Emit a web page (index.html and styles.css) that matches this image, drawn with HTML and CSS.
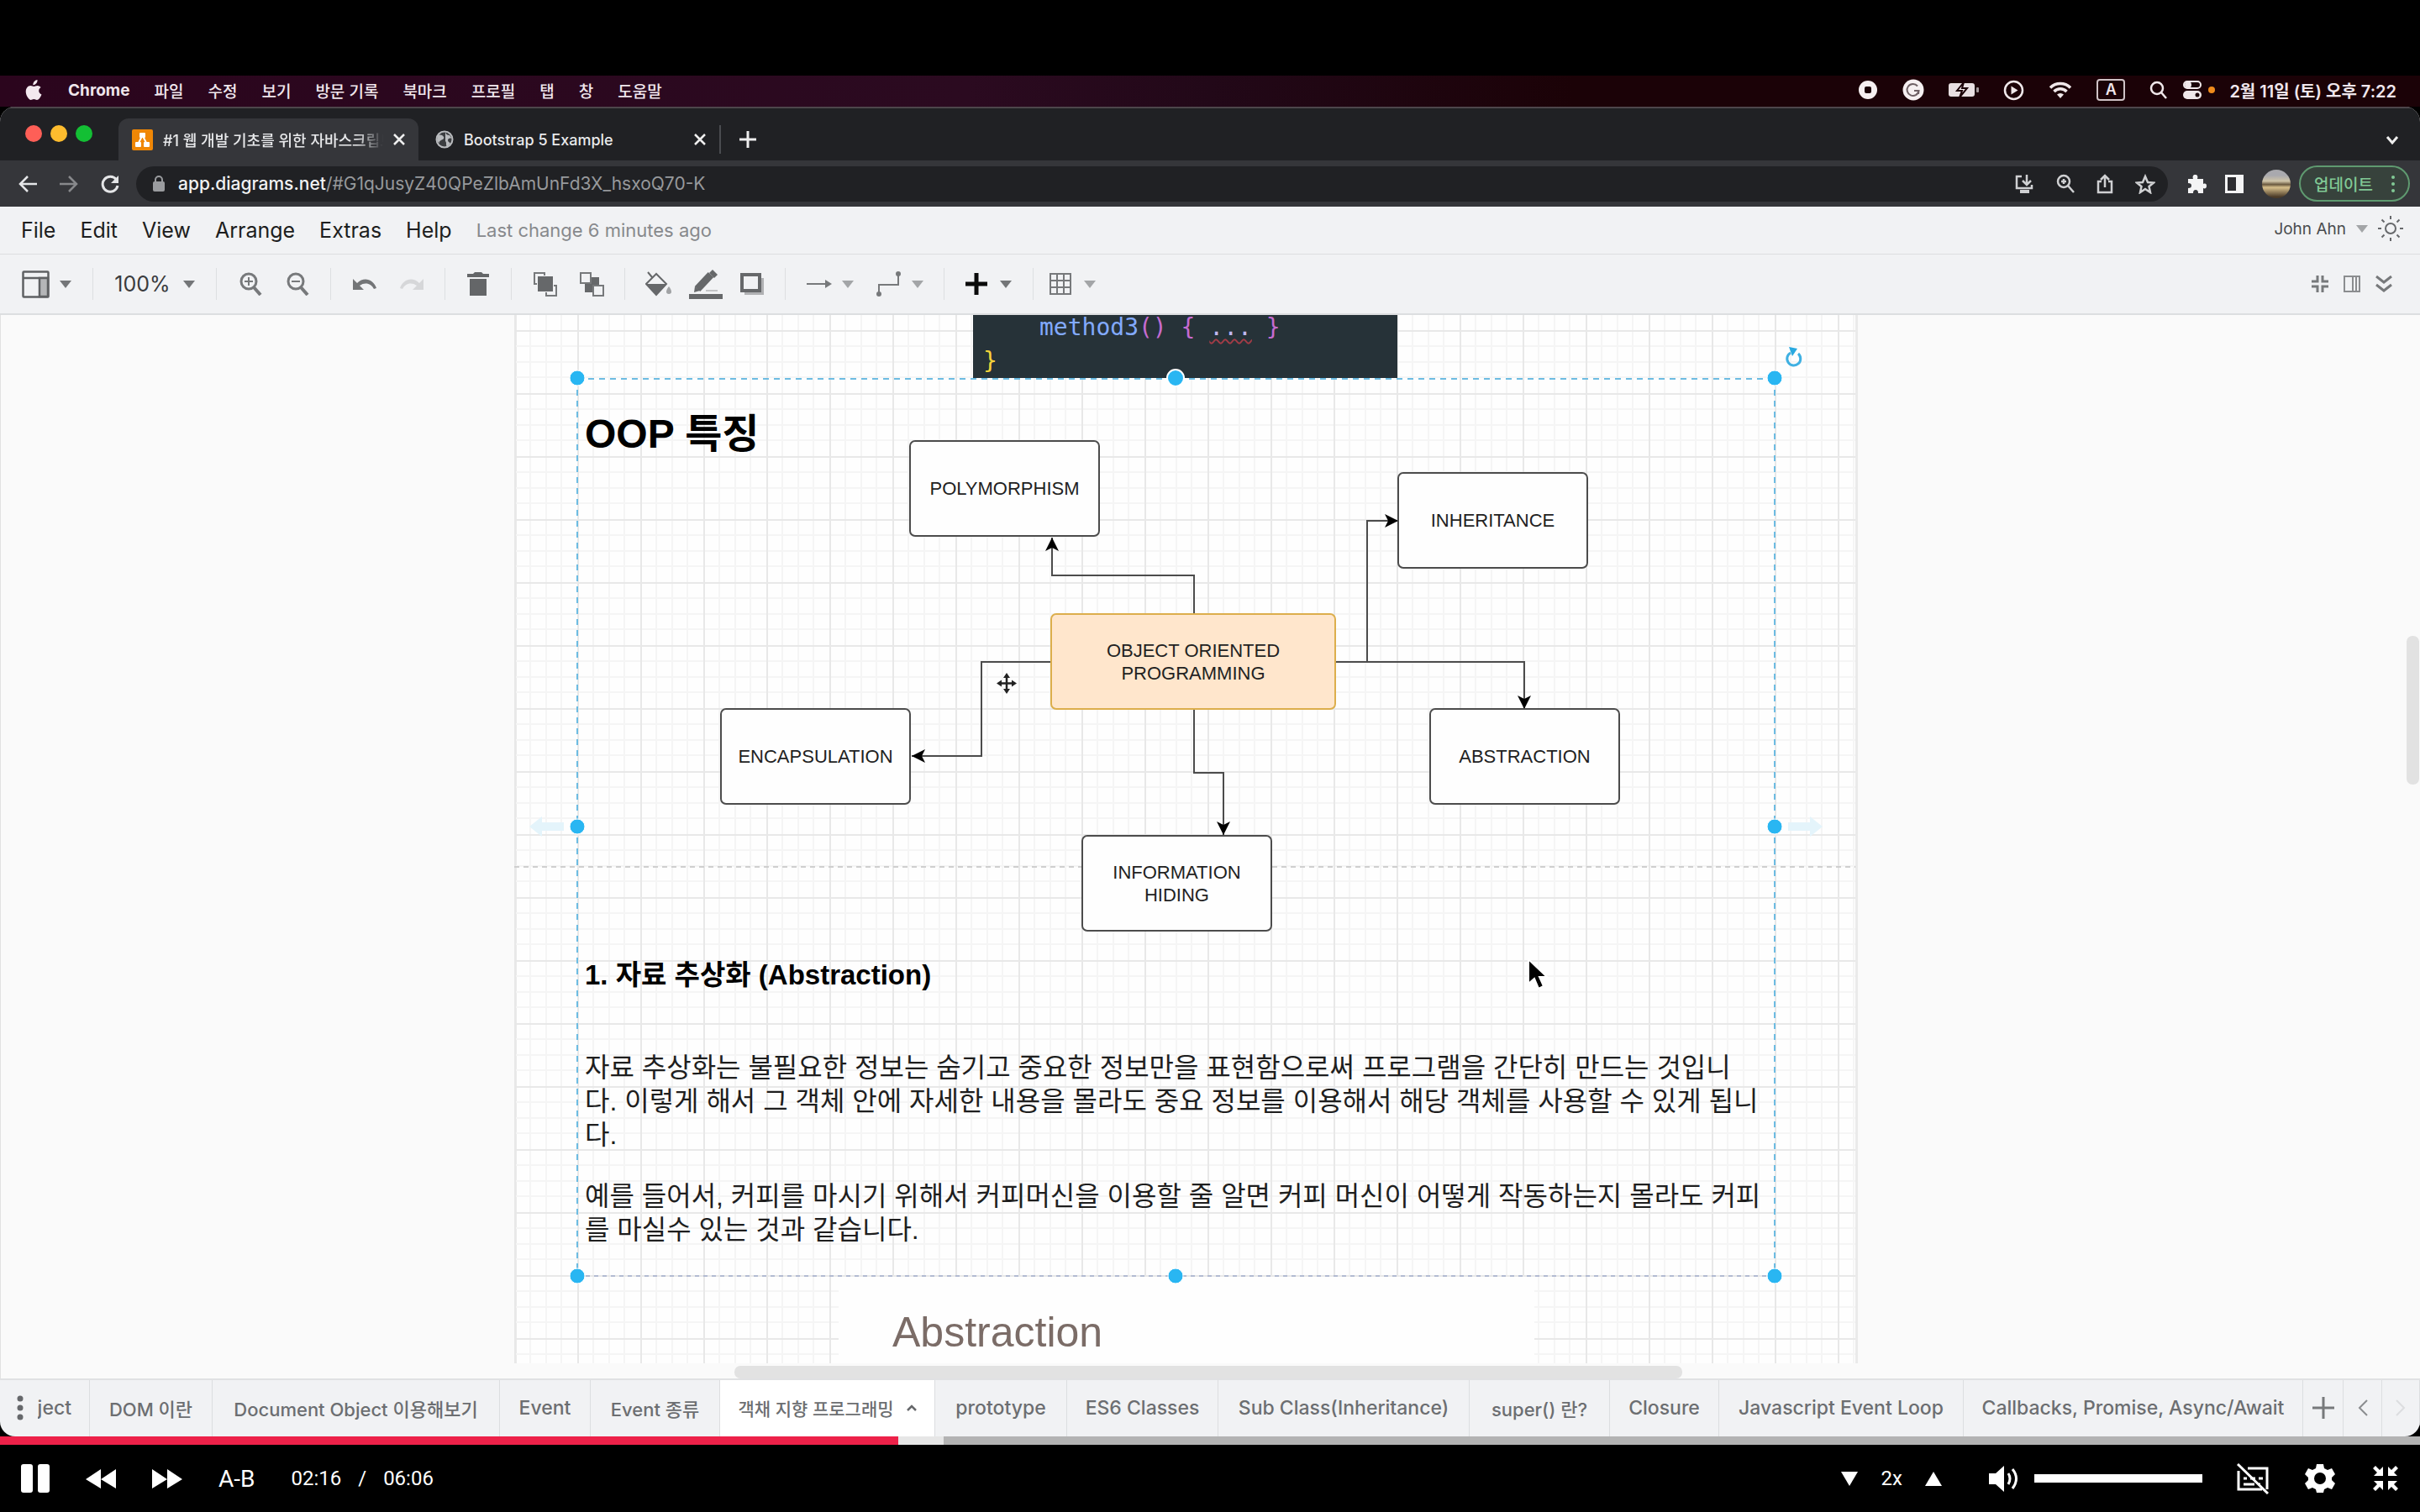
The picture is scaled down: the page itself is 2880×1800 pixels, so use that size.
FILE: index.html
```html
<!DOCTYPE html>
<html lang="ko">
<head>
<meta charset="utf-8">
<meta name="viewport" content="width=device-width, initial-scale=1">
<title>객체 지향 프로그래밍</title>
<link rel="stylesheet" href="styles.css">
</head>
<body>
<div class="player">
  <div class="screen">
    <header class="macbar">
      <nav class="macbar-menu" aria-label="macOS">
        <svg class="apple" width="24" height="28" viewBox="0 0 24 28" fill="#f3e9ef"><path d="M16.500 2c.2 2-.6 3.500-1.600 4.600-1 1.100-2.300 1.700-3.600 1.600-.2-1.700.6-3.300 1.500-4.300C13.800 2.800 15.300 2.100 16.500 2z"/><path d="M21.500 19.500c-.5 1.400-1.200 2.700-2.100 3.900-1 1.400-2 2.500-3.500 2.500-1.400 0-1.900-.8-3.600-.8s-2.300.8-3.600.8c-1.400 0-2.500-1.200-3.500-2.600C2.500 19.400 1.800 14 4.200 11.200c1-1.300 2.600-2.100 4.200-2.100 1.600 0 2.700.9 3.900.9 1.200 0 2.300-1 4.300-1 1.600 0 3 .7 4 2-3.500 2-3 7 .9 8.500z"/></svg>
        <strong>Chrome</strong><span>파일</span><span>수정</span><span>보기</span><span>방문 기록</span><span>북마크</span><span>프로필</span><span>탭</span><span>창</span><span>도움말</span>
      </nav>
      <div class="macbar-status">
        <svg width="24" height="24" viewBox="0 0 24 24"><circle cx="12" cy="12" r="11" fill="#f6f0f1"/><rect x="8" y="8" width="8" height="8" rx="2" fill="#1b0207"/></svg>
        <svg width="26" height="26" viewBox="0 0 26 26"><circle cx="13" cy="13" r="12.500" fill="#f6f0f1"/><path d="M18 8.500A7 7 0 1 0 19.500 14H14M19.500 14l-.5 4" fill="none" stroke="#6e6064" stroke-width="2"/></svg>
        <svg width="36" height="20" viewBox="0 0 36 20"><rect x="0" y="2" width="31" height="16" rx="3" fill="#e8dfe1"/><rect x="33" y="7" width="3" height="6" rx="1" fill="#a2989a"/><path d="M18 1l-8 10h6l-3 8 9-11h-6z" fill="#f6f0f1" stroke="#1b0207" stroke-width="2"/></svg>
        <svg width="25" height="25" viewBox="0 0 25 25"><circle cx="12.500" cy="12.500" r="10.500" fill="none" stroke="#f0e8ea" stroke-width="2.500"/><path d="M9.500 7.500l8 5-8 5z" fill="#f0e8ea"/></svg>
        <svg width="28" height="22" viewBox="0 0 28 22" fill="none" stroke="#f0e8ea" stroke-width="3.500"><path d="M2 8.500a17 17 0 0 1 24 0M6.500 13a10.500 10.500 0 0 1 15 0"/><path d="M14 21l-4-4.500a6 6 0 0 1 8 0z" fill="#f0e8ea" stroke="none"/></svg>
        <span class="input-source">A</span>
        <svg width="22" height="24" viewBox="0 0 22 24" fill="none" stroke="#f0e8ea" stroke-width="2.500"><circle cx="9" cy="10" r="7"/><path d="M14 15l6 7"/></svg>
        <svg class="control-center" width="24" height="24" viewBox="0 0 24 24"><rect x="2" y="2" width="20" height="8" rx="4" fill="none" stroke="#f0e8ea" stroke-width="2"/><circle cx="7" cy="6" r="4" fill="#f0e8ea"/><rect x="1" y="13" width="22" height="10" rx="5" fill="#f0e8ea"/><circle cx="18" cy="18" r="2.500" fill="#1b0207"/></svg>
        <i class="mic-dot"></i>
        <time>2월 11일 (토) 오후 7:22</time>
      </div>
    </header>

    <div class="window">
      <div class="tabstrip">
        <div class="lights"><i class="red"></i><i class="yellow"></i><i class="green"></i></div>
        <div class="tab active">
          <svg width="25" height="25" viewBox="0 0 25 25"><rect width="25" height="25" rx="2" fill="#f08705"/><path d="M12.500 7L7 18M12.500 7L18 18" stroke="#fff" stroke-width="2"/><rect x="9" y="4" width="7" height="6" rx="1" fill="#fff"/><rect x="4" y="15" width="7" height="6" rx="1" fill="#fff"/><rect x="14" y="15" width="7" height="6" rx="1" fill="#fff"/></svg>
          <span class="tab-title">#1 웹 개발 기초를 위한 자바스크립트</span>
          <button class="icon-btn" aria-label="Close tab"><svg width="14" height="14" viewBox="0 0 14 14" stroke="#eee" stroke-width="2.500"><path d="M1 1l12 12M13 1L1 13"/></svg></button>
        </div>
        <div class="tab second">
          <svg width="22" height="22" viewBox="0 0 22 22"><circle cx="11" cy="11" r="9.500" fill="#3b3d40" stroke="#b9bbbe" stroke-width="2"/><path d="M3 6c4-1 6 0 7 2s-1 3-3 4-3 2-2 4l-3-4zM12 2c1 3 2 4 5 4l3 4c-3-1-5 0-5 2s2 2 3 4l-4 4c-2-3 0-5-2-7" fill="#b9bbbe"/></svg>
          <span class="tab-title">Bootstrap 5 Example</span>
          <button class="icon-btn" aria-label="Close tab"><svg width="14" height="14" viewBox="0 0 14 14" stroke="#eee" stroke-width="2.500"><path d="M1 1l12 12M13 1L1 13"/></svg></button>
        </div>
        <button class="icon-btn new-tab" aria-label="New tab"><svg width="20" height="20" viewBox="0 0 20 20" stroke="#eee" stroke-width="3"><path d="M10 0v20M0 10h20"/></svg></button>
        <button class="icon-btn tab-search" aria-label="Search tabs"><svg width="16" height="12" viewBox="0 0 16 12" fill="none" stroke="#eee" stroke-width="3"><path d="M2 2l6 7 6-7"/></svg></button>
      </div>

      <div class="addressbar">
        <div class="nav-buttons">
          <button class="icon-btn" aria-label="Back"><svg width="22" height="20" viewBox="0 0 22 20" fill="none" stroke="#e4e5e7" stroke-width="2.500"><path d="M11 1l-9 9 9 9M2 10h20"/></svg></button>
          <button class="icon-btn" aria-label="Forward"><svg width="22" height="20" viewBox="0 0 22 20" fill="none" stroke="#87888b" stroke-width="2.500"><path d="M11 1l9 9-9 9M20 10H0"/></svg></button>
          <button class="icon-btn" aria-label="Reload"><svg width="22" height="22" viewBox="0 0 22 22" fill="none" stroke="#e4e5e7" stroke-width="3"><path d="M18.500 6A9 9 0 1 0 20 13"/><path d="M21 1v9h-9z" fill="#e4e5e7" stroke="none"/></svg></button>
        </div>
        <div class="omnibox">
          <svg width="14" height="20" viewBox="0 0 14 20"><rect y="7" width="14" height="12" rx="2" fill="#9a9c9f"/><path d="M3 8V5a4 4 0 0 1 8 0v3" fill="none" stroke="#9a9c9f" stroke-width="2"/></svg>
          <a class="url" href="#"><b>app.diagrams.net</b>/#G1qJusyZ40QPeZlbAmUnFd3X_hsxoQ70-K</a>
          <div class="omni-icons">
            <svg width="24" height="24" viewBox="0 0 24 24" fill="none" stroke="#cfd0d2" stroke-width="2.500"><path d="M9 3H3v14h18v-4M15 1v10M10 8l5 5 5-5"/><path d="M7 21h11" stroke-width="4"/></svg>
            <svg width="22" height="24" viewBox="0 0 22 24" fill="none" stroke="#cfd0d2" stroke-width="2.500"><circle cx="9" cy="9" r="7"/><path d="M14 14l7 8M6 9h6M9 6v6"/></svg>
            <svg width="20" height="24" viewBox="0 0 20 24" fill="none" stroke="#cfd0d2" stroke-width="2.500"><path d="M6 9H2v13h16V9h-4M10 16V3M5 7l5-5 5 5"/></svg>
            <svg width="24" height="24" viewBox="0 0 24 24" fill="none" stroke="#cfd0d2" stroke-width="2.500"><path d="M12 3l3 7 7 .5-5.500 4.500L18 22l-6-4-6 4 1.500-7L2 10.500 9 10z"/></svg>
          </div>
        </div>
        <div class="ext-icons">
          <svg width="24" height="24" viewBox="0 0 24 24" fill="#f4f4f5"><path d="M2 6h6c-1-3 0-5 2.500-5S14 3 13 6h7v6c3-1 4 0 4 2.500S22 18 20 17v6h-6c0-3-1-4-3-4s-3 1-3 4H2v-6c3 0 4-1 4-3s-1-3-4-3z"/></svg>
          <svg width="22" height="22" viewBox="0 0 22 22"><rect x="1.500" y="1.500" width="19" height="19" fill="#2d2d31" stroke="#f4f4f5" stroke-width="3"/><rect x="13" y="1" width="8" height="20" fill="#f4f4f5"/></svg>
          <span class="avatar"></span>
        </div>
        <button class="update">업데이트<svg width="4" height="20" viewBox="0 0 4 20" fill="#81c995"><circle cx="2" cy="2" r="2"/><circle cx="2" cy="10" r="2"/><circle cx="2" cy="18" r="2"/></svg></button>
      </div>

      <div class="appmenu">
        <nav class="appmenu-items" aria-label="Application menu">
          <button>File</button><button>Edit</button><button>View</button><button>Arrange</button><button>Extras</button><button>Help</button>
          <span class="last-change">Last change 6 minutes ago</span>
        </nav>
        <div class="account">
          <button>John Ahn <i class="caret"></i></button>
          <svg width="30" height="30" viewBox="0 0 30 30" fill="none" stroke="#66686b" stroke-width="2"><circle cx="15" cy="15" r="6"/><path d="M15 0v4M15 26v4M0 15h4M26 15h4M4.500 4.500l3 3M22.500 22.500l3 3M4.500 25.500l3-3M22.500 7.500l3-3"/></svg>
        </div>
      </div>

      <div class="toolbar">
        <div class="group">
          <button aria-label="View"><svg width="33" height="33" viewBox="0 0 33 33" fill="none" stroke="#5f6163" stroke-width="2.500"><rect x="1.500" y="1.500" width="30" height="30" rx="1"/><path d="M1 9h30"/><rect x="21" y="9" width="10" height="22" fill="#b5b6b8"/></svg></button>
          <i class="caret dark"></i>
        </div>
        <div class="group wide-gap"><button class="zoom-label">100%</button><i class="caret dark"></i></div>
        <div class="group icons">
          <button aria-label="Zoom in"><svg width="28" height="28" viewBox="0 0 28 28" fill="none" stroke="#77797b" stroke-width="3"><circle cx="12" cy="11" r="9"/><path d="M18 18l8 9" stroke-width="4"/><path d="M7 11h10M12 6v10" stroke-width="2"/></svg></button>
          <button aria-label="Zoom out"><svg width="28" height="28" viewBox="0 0 28 28" fill="none" stroke="#77797b" stroke-width="3"><circle cx="12" cy="11" r="9"/><path d="M18 18l8 9" stroke-width="4"/><path d="M7 11h10" stroke-width="2"/></svg></button>
        </div>
        <div class="group icons">
          <button aria-label="Undo"><svg width="28" height="18" viewBox="0 0 28 18"><path d="M0 3v13h13l-5-5c7-5 14-2 17 4l3-1C24 3 13 0 5 8z" fill="#737577"/></svg></button>
          <button aria-label="Redo"><svg width="28" height="18" viewBox="0 0 28 18"><path d="M28 3v13H15l5-5c-7-5-14-2-17 4l-3-1C4 3 15 0 23 8z" fill="#d6d7d9"/></svg></button>
        </div>
        <div class="group">
          <button aria-label="Delete"><svg width="26" height="30" viewBox="0 0 26 30" fill="#646668"><path d="M0 3h7l2-2h8l2 2h7v4H0zM3 9h20v20H3z"/></svg></button>
        </div>
        <div class="group tight">
          <button aria-label="To front"><svg width="30" height="30" viewBox="0 0 30 30" fill="none" stroke="#77797b" stroke-width="2"><path d="M5 15H2V2h12v3M25 17h3v12H16v-4"/><rect x="7" y="7" width="16" height="16" fill="#66686a" stroke="#66686a"/></svg></button>
          <button aria-label="To back"><svg width="30" height="30" viewBox="0 0 30 30" fill="none" stroke="#77797b" stroke-width="2"><path d="M8 8h15v16H8z" fill="#66686a" stroke="#66686a"/><rect x="2" y="2" width="12" height="12" fill="#f1f2f4"/><rect x="17" y="17" width="12" height="12" fill="#f1f2f4"/></svg></button>
        </div>
        <div class="group styles">
          <button aria-label="Fill color"><svg width="32" height="30" viewBox="0 0 32 30"><path d="M3 1l5 6M13 3L1 15l12 13 12-13z" stroke="#66686a" stroke-width="2" fill="none"/><path d="M1 15h24L13 28z" fill="#66686a"/><path d="M28 18c4 5 4 9 0 9s-4-4 0-9z" fill="#a0a2a4"/></svg></button>
          <button aria-label="Line color"><svg width="40" height="36" viewBox="0 0 40 36"><path d="M10 24l16-17" stroke="#66686a" stroke-width="9"/><path d="M24 5l4-4 6 6-4 4z" fill="#66686a"/><path d="M7 21l-1 7 7-2z" fill="#66686a"/><path d="M20 26h14" stroke="#c3c4c6" stroke-width="2"/><rect y="30" width="40" height="6" fill="#66686a"/></svg></button>
          <button aria-label="Shadow"><svg width="30" height="28" viewBox="0 0 30 28"><path d="M6 7h23v20H6z" fill="#b0b1b3"/><rect x="3" y="3" width="21" height="19" fill="#f1f2f4" stroke="#66686a" stroke-width="4"/></svg></button>
        </div>
        <div class="group">
          <button aria-label="Connection"><svg width="30" height="12" viewBox="0 0 30 12"><path d="M0 6h28" stroke="#77797b" stroke-width="2"/><path d="M22 1l8 5-8 5z" fill="#77797b"/></svg></button>
          <i class="caret"></i>
          <button class="waypoints" aria-label="Waypoints"><svg width="30" height="32" viewBox="0 0 30 32" fill="none" stroke="#77797b" stroke-width="2"><path d="M3 28V17h23V4"/><circle cx="3" cy="28" r="2" fill="#77797b"/><circle cx="26" cy="4" r="2" fill="#77797b"/></svg></button>
          <i class="caret"></i>
        </div>
        <div class="group wide-gap">
          <button aria-label="Insert"><svg width="26" height="26" viewBox="0 0 26 26" stroke="#0b0b0b" stroke-width="5"><path d="M13 0v26M0 13h26"/></svg></button>
          <i class="caret dark"></i>
        </div>
        <div class="group last">
          <button aria-label="Table"><svg width="26" height="26" viewBox="0 0 26 26" fill="none" stroke="#77797b" stroke-width="2"><path d="M1 1h24v24H1zM9 1v24M17 1v24M1 9h24M1 17h24"/></svg></button>
          <i class="caret"></i>
        </div>
        <div class="group-end">
          <button aria-label="Fullscreen"><svg width="20" height="20" viewBox="0 0 20 20" fill="none" stroke="#77797b" stroke-width="3"><path d="M7 0v7H0M13 0v7h7M7 20v-7H0M13 20v-7h7"/></svg></button>
          <button aria-label="Format panel"><svg width="20" height="20" viewBox="0 0 20 20" fill="none" stroke="#8b8d8f" stroke-width="2"><path d="M1 1h18v18H1zM11 1v18M15 1v18"/></svg></button>
          <button aria-label="Collapse"><svg width="20" height="20" viewBox="0 0 20 20" fill="none" stroke="#77797b" stroke-width="3"><path d="M1 1l9 7 9-7M1 11l9 7 9-7"/></svg></button>
        </div>
      </div>

      <main class="canvas">
        <div class="page">
          <svg class="grid" width="100%" height="100%">
            <defs><pattern id="grid" width="75" height="75" y="18" patternUnits="userSpaceOnUse"><path d="M19 0v75M38 0v75M56 0v75M0 19h75M0 38h75M0 56h75" stroke="#f5f5f5" stroke-width="2" fill="none"/><path d="M0 1h75M1 0v75" stroke="#e8e8e8" stroke-width="2" fill="none"/></pattern></defs>
            <rect width="100%" height="100%" fill="url(#grid)"/>
            <path d="M0 657h1599" stroke="#cfcfcf" stroke-width="2" stroke-dasharray="6 5"/>
          </svg>

          <div class="code">
            <div class="line indent"><span class="fn">method3</span><span class="pn">() { <span class="dots">...</span> }</span></div>
            <div class="line"><span class="br">}</span></div>
          </div>
          <div class="picture">Abstraction</div>

          <article class="note">
            <h1>OOP 특징</h1>
            <h2>1. 자료 추상화 (Abstraction)</h2>
            <p>자료 추상화는 불필요한 정보는 숨기고 중요한 정보만을 표현함으로써 프로그램을 간단히 만드는 것입니<br>다. 이렇게 해서 그 객체 안에 자세한 내용을 몰라도 중요 정보를 이용해서 해당 객체를 사용할 수 있게 됩니<br>다.</p>
            <p>예를 들어서, 커피를 마시기 위해서 커피머신을 이용할 줄 알면 커피 머신이 어떻게 작동하는지 몰라도 커피<br>를 마실수 있는 것과 같습니다.</p>
          </article>

          <svg class="edges" width="1599" height="1248" viewBox="612 375 1599 1248" fill="none" stroke="#4c4c4c" stroke-width="2">
            <defs><marker id="arrow" viewBox="0 0 16 16" refX="16" refY="8" markerWidth="16" markerHeight="16" markerUnits="userSpaceOnUse" orient="auto"><path d="M0 0l16 8-16 8 4-8z" fill="#000" stroke="none"/></marker></defs>
            <path d="M1421 731V685H1252V640" marker-end="url(#arrow)"/>
            <path d="M1251 788H1168V900H1085" marker-end="url(#arrow)"/>
            <path d="M1590 788H1627V620H1664" marker-end="url(#arrow)"/>
            <path d="M1590 788H1814V844" marker-end="url(#arrow)"/>
            <path d="M1421 845V920H1456V994" marker-end="url(#arrow)"/>
          </svg>
          <div class="node polymorphism">POLYMORPHISM</div>
          <div class="node inheritance">INHERITANCE</div>
          <div class="node root">OBJECT ORIENTED<br>PROGRAMMING</div>
          <div class="node encapsulation">ENCAPSULATION</div>
          <div class="node abstraction">ABSTRACTION</div>
          <div class="node hiding">INFORMATION<br>HIDING</div>

          <svg class="edges" width="1599" height="1248" viewBox="612 375 1599 1248">
            <g fill="none" stroke="#6dbce2" stroke-width="2" stroke-dasharray="7 6"><path d="M687 451H2112M687 451V1519M2112 451V1519"/><path d="M687 1519H2112" stroke="#b3bbd2" stroke-dasharray="5 5"/></g>
            <g fill="#29b6f2" stroke="#fff" stroke-width="1"><circle cx="687" cy="450" r="9"/><circle cx="1399" cy="450" r="10" stroke-width="2"/><circle cx="2112" cy="450" r="9"/><circle cx="687" cy="984" r="9"/><circle cx="2112" cy="984" r="9"/><circle cx="687" cy="1519" r="9"/><circle cx="1399" cy="1519" r="9"/><circle cx="2112" cy="1519" r="9"/></g>
            <g fill="#e4f4fb"><path d="M630 984l15-12v7h26v10h-26v7zM2169 984l-15-12v7h-26v10h26v7z"/></g>
            <path d="M2140 421a8 8 0 1 1-9-1" fill="none" stroke="#3fb0e2" stroke-width="3"/><path d="M2129 413l10 2-6 9z" fill="#29a9e0"/>
            <path d="M1198 804v19M1188.500 813.500h19" stroke="#222" stroke-width="2.500"/><path d="M1198 801l4 6h-8zM1198 826l4-6h-8zM1186 813.500l6-4v8zM1210 813.500l-6-4v8z" fill="#222"/>
            <path d="M1819 1142v29l7-6 5 12 6-3-5-11h9z" fill="#000" stroke="#fff" stroke-width="2"/>
          </svg>
        </div>
        <div class="hthumb"></div>
        <div class="vthumb"></div>
      </main>

      <div class="sheets">
        <button class="first"><svg width="8" height="30" viewBox="0 0 8 30" fill="#66686b"><circle cx="4" cy="4" r="3.500"/><circle cx="4" cy="15" r="3.500"/><circle cx="4" cy="26" r="3.500"/></svg><span class="clip"><span>Object</span></span></button>
        <button class="mixed">DOM 이란</button>
        <button class="mixed">Document Object 이용해보기</button>
        <button>Event</button>
        <button class="mixed">Event 종류</button>
        <button class="current">객채 지향 프로그래밍<svg width="12" height="8" viewBox="0 0 12 8" fill="none" stroke="#66686b" stroke-width="2.500"><path d="M1 7l5-5 5 5"/></svg></button>
        <button>prototype</button>
        <button>ES6 Classes</button>
        <button>Sub Class(Inheritance)</button>
        <button class="mixed">super() 란?</button>
        <button>Closure</button>
        <button>Javascript Event Loop</button>
        <button>Callbacks, Promise, Async/Await</button>
        <button aria-label="Insert page"><svg width="26" height="26" viewBox="0 0 26 26" stroke="#77797b" stroke-width="3"><path d="M13 0v26M0 13h26"/></svg></button>
        <button aria-label="Previous"><svg width="12" height="20" viewBox="0 0 12 20" fill="none" stroke="#8b8d8f" stroke-width="2"><path d="M11 1L2 10l9 9"/></svg></button>
        <button aria-label="Next"><svg width="12" height="20" viewBox="0 0 12 20" fill="none" stroke="#dcdddf" stroke-width="2"><path d="M1 1l9 9-9 9"/></svg></button>
      </div>
    </div>
  </div>

  <div class="progress" role="progressbar" aria-label="재생 위치" aria-valuenow="37"><div class="buffered" style="width:39%"></div><div class="played" style="width:37.13%"></div></div>
  <footer class="controls">
    <div class="transport">
      <button aria-label="Pause"><svg width="34" height="34" viewBox="0 0 34 34" fill="#fff"><rect x="0" width="14" height="34" rx="3"/><rect x="20" width="14" height="34" rx="3"/></svg></button>
      <button aria-label="Rewind"><svg width="36" height="23" viewBox="0 0 36 23" fill="#fff"><path d="M18 0v23L0 12zM36 0v23L18 12z"/></svg></button>
      <button aria-label="Forward"><svg width="36" height="23" viewBox="0 0 36 23" fill="#fff"><path d="M0 0v23l18-11zM18 0v23l18-11z"/></svg></button>
      <button class="ab">A-B</button>
      <div class="time"><span>02:16</span><span>/</span><span>06:06</span></div>
    </div>
    <div class="settings">
      <button aria-label="Slower"><svg width="20" height="17" viewBox="0 0 20 17" fill="#fff"><path d="M0 0h20L10 17z"/></svg></button>
      <span class="speed">2x</span>
      <button aria-label="Faster"><svg width="20" height="17" viewBox="0 0 20 17" fill="#fff"><path d="M0 17h20L10 0z"/></svg></button>
      <button class="mute" aria-label="Mute"><svg width="37" height="31" viewBox="0 0 37 31"><path d="M0 9h8L18 0v31L8 22H0z" fill="#fff"/><path d="M23 9q4 6 0 13M28 4q9 11 0 23" fill="none" stroke="#fff" stroke-width="3"/></svg></button>
      <input class="volume" type="range" aria-label="Volume" value="100">
      <button class="cc" aria-label="Subtitles"><svg width="38" height="37" viewBox="0 0 38 37" fill="none" stroke="#fff" stroke-width="3"><path d="M13 6h23v25M30 31H2V9M8 18h4M16 18h6M26 18h5M8 25h13M26 25h2"/><path d="M1 1l36 35"/></svg></button>
      <button aria-label="Settings"><svg width="36" height="36" viewBox="0 0 36 36"><path d="M14 1h8l1 5 4 2 5-2 4 7-4 4v3l4 4-4 7-5-2-4 2-1 4h-8l-1-4-4-2-5 2-4-7 4-4v-3l-4-4 4-7 5 2 4-2z" fill="#fff"/><circle cx="18" cy="18" r="7" fill="#000"/></svg></button>
      <button aria-label="Exit full screen"><svg width="32" height="32" viewBox="0 0 32 32" fill="#fff"><path d="M13 13H2l4-4-5-5 3-3 5 5 4-4zM19 13h11l-4-4 5-5-3-3-5 5-4-4zM13 19H2l4 4-5 5 3 3 5-5 4 4zM19 19h11l-4 4 5 5-3 3-5-5-4 4z"/></svg></button>
    </div>
  </footer>
</div>
</body>
</html>
```
FILE: styles.css
```css
* { box-sizing: border-box; }
body { margin: 0; background: #000; font-family: "Inter", "Noto Sans CJK KR", sans-serif; }
button { border: 0; padding: 0; background: none; font: inherit; color: inherit; display: flex; align-items: center; justify-content: center; white-space: nowrap; }
svg { display: block; flex: none; }

.player { display: flex; flex-direction: column; height: 100vh; padding-top: 90px; }
.screen { display: flex; flex-direction: column; flex: 1; min-height: 0; }

.macbar { display: flex; justify-content: space-between; align-items: center; height: 37px; flex: none; padding: 0 28px 3px; background: linear-gradient(90deg, #2b051d 0%, #2b0a20 40%, #220818 50%, #1b0207 65%, #1b0207 100%); color: #f0e6ec; font-size: 19px; font-weight: 500; }
.macbar-menu { display: flex; align-items: center; gap: 29px; }
.macbar-menu strong { font-weight: 700; }
.macbar-status { display: flex; align-items: center; gap: 29px; }
.input-source { width: 34px; height: 26px; border: 2px solid #cfc3c6; border-radius: 4px; font-size: 18px; font-weight: 600; line-height: 22px; text-align: center; }
.control-center { margin-left: -12px; }
.mic-dot { width: 8px; height: 8px; margin-left: -22px; border-radius: 50%; background: #ef8b1c; }
.macbar-status time { margin-left: -12px; font-size: 20px; font-weight: 600; }

.window { display: flex; flex-direction: column; flex: 1; min-height: 0; border-radius: 18px; overflow: hidden; background: #f1f2f4; }
.tabstrip { display: flex; align-items: flex-end; height: 64px; flex: none; background: #202124; border-top: 2px solid #4d464b; padding-right: 25px; }
.lights { display: flex; gap: 10px; width: 141px; padding: 0 0 22px 30px; }
.lights i { width: 20px; height: 20px; border-radius: 50%; }
.red { background: #fe5f57; }
.yellow { background: #febc2e; }
.green { background: #13bf34; }
.tab { display: flex; align-items: center; height: 50px; padding: 0 16px; gap: 12px; color: #e8e9eb; font-size: 18px; font-weight: 500; border-radius: 12px 12px 0 0; }
.tab.active { background: #35363a; }
.tab.second { padding-left: 20px; }
.tab-title { width: 262px; overflow: hidden; white-space: nowrap; }
.active .tab-title { mask-image: linear-gradient(90deg, #000 88%, transparent); }
.icon-btn { flex: none; }
.new-tab { height: 34px; margin-bottom: 8px; padding-left: 22px; border-left: 2px solid #4a4c50; }
.tab-search { margin: 0 0 18px auto; }

.addressbar { display: flex; align-items: center; height: 55px; flex: none; background: #35363a; padding-right: 12px; }
.nav-buttons { display: flex; gap: 27px; width: 162px; padding-left: 22px; }
.omnibox { display: flex; align-items: center; flex: 1; height: 42px; padding: 0 15px 0 20px; border-radius: 21px; background: #202124; }
.url { flex: 1; padding-left: 16px; color: #97999c; font-size: 21px; text-decoration: none; }
.url b { color: #f1f2f3; font-weight: 500; }
.omni-icons { display: flex; gap: 26px; }
.ext-icons { display: flex; align-items: center; gap: 22px; padding: 0 10px 0 22px; }
.avatar { width: 34px; height: 34px; border-radius: 50%; background: linear-gradient(#a9a9ae 20%, #cfc4a8 40%, #6b5a40 52%, #d8c08c 62%, #4b3b28 95%); }
.update { gap: 22px; width: 132px; height: 43px; border: 2px solid #5f9a70; border-radius: 22px; background: #37423c; color: #81c995; font-size: 19px; font-weight: 500; }

.appmenu { display: flex; align-items: center; justify-content: space-between; height: 57px; flex: none; padding: 0 20px 0 25px; border-bottom: 1px solid #dcdee0; color: #1d1e20; font-size: 25px; }
.appmenu-items { display: flex; align-items: center; gap: 29px; }
.last-change { color: #87898c; font-size: 22px; }
.account { display: flex; align-items: center; gap: 12px; font-size: 19px; color: #4a4c4e; padding-bottom: 4px; }
.account button { gap: 12px; }
.caret { border: 7px solid transparent; border-top: 9px solid #a3a5a7; border-bottom: 0; }
.caret.dark { border-top-color: #747678; }

.toolbar { display: grid; grid-template-columns: 111px 147px 136px 136px 79px 135px 191px 189px 106px 110px 1fr; align-items: center; height: 72px; flex: none; border-bottom: 2px solid #dcdee0; }
.group { display: flex; align-items: center; justify-content: center; gap: 12px; height: 38px; border-right: 1px solid #dddfe1; }
.group.wide-gap { gap: 15px; }
.group.icons { gap: 28px; }
.group.tight { gap: 25px; }
.group.styles { gap: 20px; }
.waypoints { margin-left: 15px; }
.group.last { justify-content: flex-start; padding-left: 19px; border: 0; gap: 15px; }
.zoom-label { font-size: 25px; color: #3a3b3d; }
.group-end { display: flex; justify-content: flex-end; gap: 18px; padding-right: 33px; }

.canvas { position: relative; flex: 1; min-height: 0; overflow: hidden; background: #fafafa; border-left: 1px solid #e2e2e2; }
.page { position: absolute; left: 611px; top: 0; bottom: 18px; width: 1599px; background: #fefefe; border: solid #eaeaea; border-width: 0 3px 0 0; box-shadow: inset 3px 0 #eaeaea; overflow: hidden; }
.grid, .edges { position: absolute; left: 0; top: 0; }
.code { position: absolute; left: 546px; top: 0; width: 505px; height: 75px; display: flex; flex-direction: column; justify-content: flex-end; padding-left: 12px; background: #263238; font: 28px/40px "DejaVu Sans Mono", monospace; }
.line { white-space: pre; }
.indent { padding-left: 67px; }
.fn { color: #82aaff; }
.pn { color: #c56bd0; }
.br { color: #f5d43a; }
.dots { color: #c0b8f0; text-decoration: underline wavy #a33b46 2px; text-underline-offset: 4px; }
.picture { position: absolute; left: 386px; top: 1145px; width: 828px; bottom: 0; padding: 36px 0 0 64px; background: #fefefe; color: #7b6c67; font: 50px/60px "Liberation Sans", sans-serif; }
.note { position: absolute; left: 84px; top: 78px; width: 1420px; color: #1e1e1e; font: 32px/40px "Liberation Sans", "Noto Sans CJK KR", sans-serif; }
.note h1 { margin: 34px 0 0; font-size: 48px; line-height: 60px; color: #000; }
.note h2 { margin: 594px 0 0; font-size: 33px; line-height: 40px; color: #000; }
.note p { margin: 0 0 33px; white-space: nowrap; }
.note h2 + p { margin-top: 70px; }
.node { position: absolute; display: flex; align-items: center; justify-content: center; width: 227px; height: 115px; border: 2px solid #4c4c4c; border-radius: 7px; background: #fefefe; color: #222; font: 22px/27px "Liberation Sans", sans-serif; text-align: center; }
.polymorphism { left: 470px; top: 149px; }
.inheritance { left: 1051px; top: 187px; }
.root { left: 638px; top: 355px; width: 340px; background: #ffe6cc; border-color: #dcae4c; }
.encapsulation { left: 245px; top: 468px; }
.abstraction { left: 1089px; top: 468px; }
.hiding { left: 675px; top: 619px; }
.hthumb { position: absolute; left: 873px; bottom: 0; width: 1128px; height: 15px; border-radius: 7px; background: #e2e2e2; }
.vthumb { position: absolute; right: 1px; top: 382px; width: 15px; height: 177px; border-radius: 7px; background: #e2e2e2; }

.sheets { display: grid; grid-template-columns: 107px 146px 342px 108px 154px 256px 157px 180px 299px 167px 130px 291px 404px 48px 46px 1fr; height: 69px; flex: none; border-top: 2px solid #e0e1e3; color: #6c6e71; font-size: 23px; font-weight: 500; }
.sheets button { border-right: 1px solid #dcdee0; padding-bottom: 2px; }
.sheets .mixed { font-size: 22px; }
.sheets .current { gap: 15px; background: #fff; font-size: 21px; }
.sheets .first { justify-content: flex-start; padding-left: 20px; gap: 17px; }
.clip { display: flex; justify-content: flex-end; width: 40px; overflow: hidden; }

.progress { position: relative; height: 10px; flex: none; background: #b3b3b3; }
.buffered, .played { position: absolute; left: 0; top: 0; height: 10px; background: #e6e6e6; }
.played { background: #ed2149; }
.controls { display: flex; justify-content: space-between; align-items: center; height: 80px; flex: none; padding: 0 25px; color: #fff; font-family: "Roboto", sans-serif; font-size: 24px; }
.transport, .settings { display: flex; align-items: center; }
.transport { gap: 43px; }
.ab { font-size: 28px; }
.time { display: flex; gap: 20px; }
.speed { margin: 0 27px 0 28px; }
.mute { margin-left: 56px; }
.volume { appearance: none; width: 200px; height: 10px; margin: 0 41px 0 17px; background: #fff; }
.volume::-webkit-slider-thumb { appearance: none; width: 10px; height: 10px; background: #fff; }
.cc { margin-right: 43px; }
.settings button:last-child { margin-left: 44px; }
```
